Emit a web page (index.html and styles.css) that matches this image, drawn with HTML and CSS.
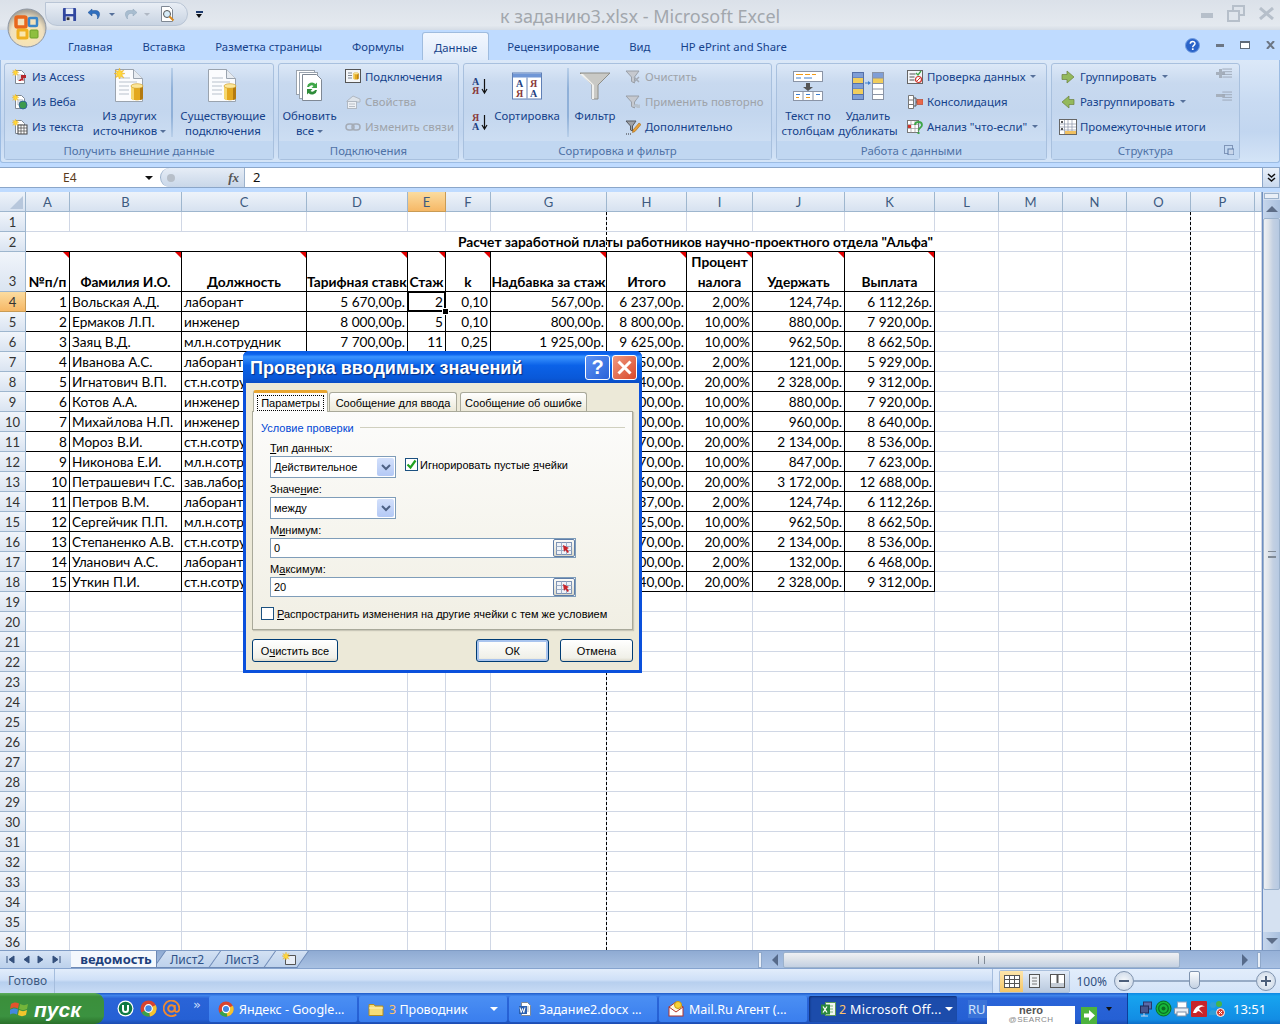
FILE: index.html
```html
<!DOCTYPE html>
<html lang="ru">
<head>
<meta charset="utf-8">
<title>к заданию3.xlsx - Microsoft Excel</title>
<link rel="stylesheet" href="styles.css">
</head>
<body>

<!-- shared icon parts -->
<svg class="defs" width="0" height="0">
  <symbol id="spark" viewBox="0 0 10 10"><path d="M5 0l1 3 3-1-2 2.500 3 .5-3 1 2 3-3-1.500-1 3-1-3-3 1.500 2-3-3-1 3-.5-2-2.500 3 1z" fill="#ffd83a" stroke="#e8a818" stroke-width=".4"/></symbol>
  <symbol id="page" viewBox="0 0 16 16"><path d="M3.500 1.500h6l3 3v10h-9z" fill="#fff" stroke="#7f8894"/><path d="M5 6h6M5 8h6M5 10h6" stroke="#a9b4c2"/></symbol>
  <symbol id="bigpage" viewBox="0 0 32 36"><path d="M1.500 1.500h18l9 9v23h-27z" fill="#fbfcfe" stroke="#9aa3ae"/><path d="M19.500 1.500v9h9" fill="#e6ebf1" stroke="#9aa3ae"/><path d="M5 10h11M5 14h18M5 18h10M5 22h10M5 26h10" stroke="#b8c1cc"/></symbol>
  <symbol id="cyl" viewBox="0 0 14 18"><path d="M1 3v12c0 3 12 3 12 0V3z" fill="#e3a81f"/><path d="M1 3v12c0 1.500 2 2 3 2.300V4z" fill="#f6d76e"/><path d="M10 4v13c1.500-.4 3-1 3-2V3z" fill="#b37a10"/><ellipse cx="7" cy="3" rx="6" ry="2.300" fill="#fbe69a" stroke="#c99416" stroke-width=".6"/></symbol>
  <symbol id="funnel" viewBox="0 0 32 28"><path d="M1 1h30L19 13v14h-6V13z" fill="#c9c9c5" stroke="#8e8e88"/><path d="M13 13v14h2V13L4 2H1z" fill="#f1f1ee"/></symbol>
  <symbol id="smallfunnel" viewBox="0 0 16 16"><path d="M1 2h13L9.500 8v6l-3-1.500V8z" fill="#c6c9cf" stroke="#9aa0a8"/></symbol>
  <symbol id="out" viewBox="0 0 18 14"><path d="M6 2h11M6 5h11M6 8h11M6 11h11" stroke="#9aa4b2"/></symbol>
</svg>

<div class="window">

  <header class="titlebar">
    <div class="qat">
      <svg class="qat-icon" width="15" height="15" viewBox="0 0 16 16"><rect x="1" y="1" width="14" height="14" rx="1" fill="#31479f"/><rect x="4" y="1.500" width="8" height="6" fill="#e8eef8"/><rect x="4" y="10" width="8" height="5" fill="#dfe3ea"/><rect x="5" y="11" width="3" height="3" fill="#333"/></svg>
      <svg class="qat-icon undo" width="16" height="16" viewBox="0 0 16 16"><path d="M5 3L1 6.500 5 10V7.500c4-.6 6 1 5.500 5.500 3-3.500 3-8-1.500-8.500-1.500-.2-3 0-4 .2z" fill="#2f6fc0" stroke="#1f4f90" stroke-width=".5"/></svg>
      <i class="dd qat-dd"></i>
      <svg class="qat-icon redo" width="16" height="16" viewBox="0 0 16 16"><path d="M11 3l4 3.500L11 10V7.500c-4-.6-6 1-5.500 5.500-3-3.500-3-8 1.500-8.500 1.500-.2 3 0 4 .2z" fill="#a8bdd0" stroke="#8ea4b8" stroke-width=".5"/></svg>
      <i class="dd qat-dd off"></i>
      <svg class="qat-icon preview" width="18" height="18" viewBox="0 0 18 18"><path d="M2.500 1.500h8l3 3v12h-11z" fill="#fff" stroke="#7f8894"/><circle cx="8" cy="9" r="3.500" fill="#d7ecf8" stroke="#555"/><path d="M10.500 11.500l4 4" stroke="#d98a20" stroke-width="2"/></svg>
    </div>
    <div class="qat-more"><i class="bar"></i><i class="dd dark"></i></div>
    <div class="doc-title">к заданию3.xlsx - Microsoft Excel</div>
    <div class="win-buttons">
      <svg width="13" height="8" viewBox="0 0 13 8"><rect y="3" width="12" height="5" fill="#b6bfca"/></svg>
      <svg width="18" height="17" viewBox="0 0 18 17"><rect x="6" y="1" width="11" height="9" fill="none" stroke="#b6bfca" stroke-width="2"/><rect x="1" y="6" width="11" height="10" fill="#dfe5ec" stroke="#b6bfca" stroke-width="2"/></svg>
      <svg width="17" height="13" viewBox="0 0 17 13"><path d="M2 1l13 11M15 1L2 12" stroke="#b6bfca" stroke-width="3"/></svg>
    </div>
  </header>

  <nav class="tabs">
    <span class="tab">Главная</span>
    <span class="tab">Вставка</span>
    <span class="tab">Разметка страницы</span>
    <span class="tab">Формулы</span>
    <span class="tab active">Данные</span>
    <span class="tab">Рецензирование</span>
    <span class="tab">Вид</span>
    <span class="tab">HP ePrint and Share</span>
    <div class="doc-buttons">
      <svg width="15" height="15" viewBox="0 0 15 15"><circle cx="7.500" cy="7.500" r="7" fill="#2a63c8" stroke="#6f9be0"/><path d="M5.300 5.800c0-3 4.700-3 4.700-.2 0 1.900-2.300 1.800-2.300 3.600" fill="none" stroke="#fff" stroke-width="1.500"/><rect x="6.900" y="10.300" width="1.700" height="1.700" fill="#fff"/></svg>
      <svg width="8" height="4" viewBox="0 0 8 4"><rect width="8" height="3" y="1" fill="#6c7684"/></svg>
      <svg width="10" height="8" viewBox="0 0 10 8"><rect x=".5" y=".5" width="9" height="7" fill="#fff" stroke="#5f6a78"/><rect width="10" height="2" fill="#5f6a78"/></svg>
      <svg width="9" height="8" viewBox="0 0 9 8"><path d="M1 0l7 8M8 0L1 8" stroke="#6c7684" stroke-width="2"/></svg>
    </div>
  </nav>

  <section class="ribbon">

    <div class="group g1">
      <div class="group-body">
        <div class="small-col">
          <div class="sbtn"><svg width="16" height="16" viewBox="0 0 16 16"><use href="#page"/><path d="M6 12l5-4 1 1-1 1 1 1-1 1-1-1-1 1z" fill="#b5262c"/><rect x="9" y="6" width="5" height="3" fill="#b5262c"/><use href="#spark" width="7" height="7"/></svg><span>Из Access</span></div>
          <div class="sbtn"><svg width="16" height="16" viewBox="0 0 16 16"><use href="#page"/><circle cx="11" cy="11" r="4" fill="#3d9a4c" stroke="#2a5aa0" stroke-width=".8"/><use href="#spark" width="7" height="7"/></svg><span>Из Веба</span></div>
          <div class="sbtn"><svg width="16" height="16" viewBox="0 0 16 16"><use href="#page"/><rect x="6" y="6" width="9" height="9" fill="#fff" stroke="#444"/><path d="M6 9h9M6 12h9M9 6v9M12 6v9" stroke="#444" stroke-width=".7"/><use href="#spark" width="7" height="7"/></svg><span>Из текста</span></div>
        </div>
        <div class="bbtn w-other">
          <svg class="big-icon" width="32" height="36" viewBox="0 0 32 36"><use href="#bigpage"/><use href="#cyl" x="16" y="15" width="14" height="18"/><use href="#spark" x="0" y="0" width="11" height="11"/></svg>
          <div class="bbtn-label">Из других<br>источников <i class="dd"></i></div>
        </div>
        <div class="vsep"></div>
        <div class="bbtn w-exist">
          <svg class="big-icon" width="32" height="36" viewBox="0 0 32 36"><use href="#bigpage"/><use href="#cyl" x="16" y="15" width="14" height="18"/></svg>
          <div class="bbtn-label">Существующие<br>подключения</div>
        </div>
      </div>
      <div class="group-label">Получить внешние данные</div>
    </div>

    <div class="group g2">
      <div class="group-body">
        <div class="bbtn w-refresh">
          <svg class="big-icon" width="30" height="36" viewBox="0 0 30 36"><rect x="1.500" y="2.500" width="18" height="24" fill="#fff" stroke="#9aa3ae"/><rect x="4.500" y="4.500" width="18" height="26" fill="#fff" stroke="#9aa3ae"/><path d="M7.500 6.500h14l5 5v21h-19z" fill="#fff" stroke="#7f8894"/><path d="M12 19a5 5 0 0 1 8.500-3l1.500-1.500V20h-5.500l2-2a3 3 0 0 0-4.500 1z" fill="#3fa648"/><path d="M22 22a5 5 0 0 1-8.500 3L12 26.500V21h5.500l-2 2a3 3 0 0 0 4.500-1z" fill="#2f8c39"/></svg>
          <div class="bbtn-label">Обновить<br>все <i class="dd"></i></div>
        </div>
        <div class="small-col">
          <div class="sbtn"><svg width="16" height="16" viewBox="0 0 16 16"><rect x=".5" y=".5" width="15" height="13" fill="#f4f6f9" stroke="#555"/><path d="M3 4h4M3 6.500h4M3 9h4" stroke="#7f8894"/><use href="#cyl" x="8" y="3" width="6" height="8"/></svg><span>Подключения</span></div>
          <div class="sbtn off"><svg width="16" height="16" viewBox="0 0 16 16"><path d="M2 7l6-5 7 3v3H2z" fill="#dde3ea" stroke="#b0b8c2"/><rect x="2.500" y="7.500" width="9" height="7" fill="#eef1f5" stroke="#b0b8c2"/><path d="M4 10h6M4 12.500h6" stroke="#b8bec6"/></svg><span>Свойства</span></div>
          <div class="sbtn off"><svg width="16" height="16" viewBox="0 0 16 16"><rect x="1" y="5" width="8" height="6" rx="3" fill="none" stroke="#a4abb5" stroke-width="1.500"/><rect x="7" y="5" width="8" height="6" rx="3" fill="none" stroke="#a4abb5" stroke-width="1.500"/></svg><span>Изменить связи</span></div>
        </div>
      </div>
      <div class="group-label">Подключения</div>
    </div>

    <div class="group g3">
      <div class="group-body">
        <div class="sort-col">
          <svg width="16" height="18" viewBox="0 0 16 18"><text x="0" y="8" class="sort-a">А</text><text x="0" y="17" class="sort-z">Я</text><path d="M12.500 2v13M10 12l2.500 4 2.500-4" fill="none" stroke="#111" stroke-width="1.200"/></svg>
          <svg width="16" height="18" viewBox="0 0 16 18"><text x="0" y="8" class="sort-z">Я</text><text x="0" y="17" class="sort-a">А</text><path d="M12.500 2v13M10 12l2.500 4 2.500-4" fill="none" stroke="#111" stroke-width="1.200"/></svg>
        </div>
        <div class="bbtn w-sort">
          <svg class="big-icon" width="30" height="27" viewBox="0 0 30 27"><rect x=".5" y=".5" width="29" height="26" fill="#fff" stroke="#5f7fb5"/><rect x="1" y="1" width="28" height="4" fill="#6f96d6"/><path d="M15 5v21" stroke="#5f7fb5"/><text x="4" y="14" class="sort-a big">А</text><text x="18" y="14" class="sort-z big">Я</text><text x="4" y="24" class="sort-z big">Я</text><text x="18" y="24" class="sort-a big">А</text></svg>
          <div class="bbtn-label">Сортировка</div>
        </div>
        <div class="vsep after-sort"></div>
        <div class="bbtn w-filter">
          <svg class="big-icon" width="32" height="28" viewBox="0 0 32 28"><use href="#funnel"/></svg>
          <div class="bbtn-label">Фильтр</div>
        </div>
        <div class="small-col">
          <div class="sbtn off"><svg width="16" height="16" viewBox="0 0 16 16"><use href="#smallfunnel"/><path d="M9 8l5 5M14 8l-5 5" stroke="#a4abb5" stroke-width="1.500"/></svg><span>Очистить</span></div>
          <div class="sbtn off"><svg width="16" height="16" viewBox="0 0 16 16"><use href="#smallfunnel"/><path d="M8 13a3.500 3.500 0 0 1 6-2l1-1v4h-4l1-1" fill="#b7c2ce"/></svg><span>Применить повторно</span></div>
          <div class="sbtn"><svg width="16" height="16" viewBox="0 0 16 16"><path d="M1 2h10L7.500 7v5l-2-1V7z" fill="#9ea2a8" stroke="#55585e"/><path d="M8 11l6-7 2 1.500-6 7-2.500 1z" fill="#e8a13a" stroke="#a66a12" stroke-width=".6"/><path d="M1 15h6" stroke="#333" stroke-dasharray="1 1"/></svg><span>Дополнительно</span></div>
        </div>
      </div>
      <div class="group-label">Сортировка и фильтр</div>
    </div>

    <div class="group g4">
      <div class="group-body">
        <div class="bbtn w-text">
          <svg class="big-icon" width="30" height="30" viewBox="0 0 30 30"><rect x=".5" y=".5" width="29" height="10" fill="#fff" stroke="#8a94a6"/><path d="M3 3.500h7M12 3.500h5M19 3.500h4" stroke="#f09a1a"/><path d="M3 7h5M11 7h8" stroke="#3f7fd0"/><path d="M13 12h4v4h3l-5 4-5-4h3z" fill="#555"/><rect x=".5" y="20.500" width="29" height="9" fill="#fff" stroke="#8a94a6"/><path d="M10 20v10M20 20v10" stroke="#8a94a6"/><path d="M3 23.500h4M13 23.500h4M23 23.500h4" stroke="#3f7fd0"/><path d="M3 26.500h3M13 26.500h4" stroke="#f09a1a"/></svg>
          <div class="bbtn-label">Текст по<br>столбцам</div>
        </div>
        <div class="bbtn w-dupes">
          <svg class="big-icon" width="32" height="28" viewBox="0 0 32 28"><rect x=".5" y=".5" width="11" height="27" fill="#7f9ed6" stroke="#5570a8"/><path d="M1 6h10M1 11.500h10M1 17h10M1 22.500h10" stroke="#5570a8"/><rect x="1" y="6" width="10" height="5" fill="#f1cd5c"/><rect x="1" y="17" width="10" height="5" fill="#f1cd5c"/><path d="M13 11h4" stroke="#3f7fd0"/><path d="M16 9l3 2-3 2z" fill="#3f7fd0"/><rect x="20.500" y=".5" width="11" height="27" fill="#fff" stroke="#8a94a6"/><rect x="21" y="1" width="10" height="5" fill="#7f9ed6"/><rect x="21" y="6" width="10" height="5" fill="#f1cd5c"/><path d="M21 6h10M21 11.500h10M21 17h10M21 22.500h10" stroke="#8a94a6"/></svg>
          <div class="bbtn-label">Удалить<br>дубликаты</div>
        </div>
        <div class="small-col">
          <div class="sbtn"><svg width="16" height="16" viewBox="0 0 16 16"><rect x=".5" y="1.500" width="15" height="13" fill="#f4f6f9" stroke="#666"/><path d="M2.500 5h6M2.500 8h5M2.500 11h5" stroke="#555"/><path d="M9 4l2 2 3-4" fill="none" stroke="#3fa648" stroke-width="1.300"/><circle cx="11.500" cy="10.500" r="3" fill="#fff" stroke="#d0342c" stroke-width="1.200"/><path d="M9.500 12.500l4-4" stroke="#d0342c"/></svg><span>Проверка данных</span><i class="dd after"></i></div>
          <div class="sbtn"><svg width="16" height="16" viewBox="0 0 16 16"><path d="M1.500 1.500h5v13h-5zM1.500 6h5M1.500 10.500h5" fill="#fff" stroke="#777"/><path d="M7 4h2v8H7M9 8h1" fill="none" stroke="#555"/><rect x="10" y="5.500" width="6" height="5" fill="#e8684a" stroke="#b23c22" stroke-width=".6"/></svg><span>Консолидация</span></div>
          <div class="sbtn"><svg width="16" height="16" viewBox="0 0 16 16"><rect x=".5" y="1.500" width="11" height="12" fill="#fff" stroke="#777"/><path d="M.5 5.500h11M.5 9.500h11M4 1.500v12M8 1.500v12" stroke="#999" stroke-width=".7"/><rect x="1" y="6" width="3" height="3" fill="#d0342c"/><path d="M8 6c0-4 7-4 7 0 0 3-3.500 2.500-3.500 5.500" fill="none" stroke="#3fa648" stroke-width="1.800"/><rect x="10.500" y="13" width="2" height="2" fill="#3fa648"/></svg><span>Анализ "что-если"</span><i class="dd after"></i></div>
        </div>
      </div>
      <div class="group-label">Работа с данными</div>
    </div>

    <div class="group g5">
      <div class="group-body">
        <div class="small-col outline-col">
          <div class="sbtn"><svg width="16" height="16" viewBox="0 0 16 16"><path d="M2 5.500h5V2l7 6-7 6v-3.500H2z" fill="#93b95c" stroke="#6c7f3d" stroke-width=".7"/></svg><span>Группировать</span><i class="dd after"></i></div>
          <div class="sbtn"><svg width="16" height="16" viewBox="0 0 16 16"><path d="M14 5.500H9V2L2 8l7 6v-3.500h5z" fill="#93b95c" stroke="#6c7f3d" stroke-width=".7"/></svg><span>Разгруппировать</span><i class="dd after"></i></div>
          <div class="sbtn"><svg class="wide-icon" width="18" height="16" viewBox="0 0 18 16"><rect x=".5" y=".5" width="17" height="15" fill="#fff" stroke="#666"/><path d="M5.500 1v14M9 1v14M13 1v14M1 5h16M1 8h16M1 11h16" stroke="#8a94a6" stroke-width=".7"/><path d="M2 3h2M3 2v2M2 10h2M3 9v2" stroke="#222"/><rect x="6" y="12" width="11" height="3" fill="#f0c060"/></svg><span>Промежуточные итоги</span></div>
        </div>
        <div class="outline-icons">
          <svg width="16" height="14" viewBox="0 0 16 14"><path d="M0 5h3V2h3v3h3v3H6v3H3V8H0z" fill="#a6b0bd"/><use href="#out" x="1" width="16" height="13"/></svg>
          <svg width="16" height="14" viewBox="0 0 16 14"><rect y="4" width="9" height="3" fill="#a6b0bd"/><use href="#out" x="1" width="16" height="13"/></svg>
        </div>
      </div>
      <div class="group-label">Структура<svg class="launcher" width="10" height="10" viewBox="0 0 10 10"><rect x=".5" y=".5" width="8" height="8" fill="none" stroke="#7f95b8"/><rect x="4" y="4" width="6" height="6" fill="#c8d6ea" stroke="#5f7da8"/></svg></div>
    </div>
  </section>

  <div class="formula-bar">
    <div class="name-box"><span>E4</span><i class="dd dark"></i></div>
    <div class="fx-pill"><i class="dot"></i><em>fx</em></div>
    <div class="formula-input">2</div>
    <div class="formula-more"><svg width="9" height="10" viewBox="0 0 9 10"><path d="M1 1l3.500 3L8 1M1 5l3.500 3L8 5" fill="none" stroke="#111" stroke-width="1.500"/></svg></div>
  </div>

  <div class="sheet-wrap">
    <div class="sheet">
      <table class="grid">
        <colgroup>
          <col class="c-rh"><col class="c-a"><col class="c-b"><col class="c-c"><col class="c-d"><col class="c-e"><col class="c-f"><col class="c-g"><col class="c-h"><col class="c-i"><col class="c-j"><col class="c-k"><col class="c-l"><col class="c-l"><col class="c-l"><col class="c-l"><col class="c-l"><col class="c-q">
        </colgroup>
        <tr class="col-heads">
          <th class="corner"><i></i></th><th>A</th><th>B</th><th>C</th><th>D</th><th class="on">E</th><th>F</th><th>G</th><th>H</th><th>I</th><th>J</th><th>K</th><th>L</th><th>M</th><th>N</th><th>O</th><th>P</th><th></th>
        </tr>
        <tr><th>1</th><td></td><td></td><td></td><td></td><td></td><td></td><td></td><td></td><td></td><td></td><td></td><td></td><td></td><td></td><td></td><td></td><td></td></tr>
        <tr class="caption-row"><th>2</th><td colspan="11" class="caption">Расчет заработной платы работников научно-проектного отдела "Альфа"</td><td></td><td></td><td></td><td></td><td></td><td></td></tr>
        <tr class="head-row"><th>3</th><td>№п/п</td><td>Фамилия И.О.</td><td>Должность</td><td>Тарифная ставка</td><td>Стаж</td><td>k</td><td>Надбавка за стаж</td><td>Итого</td><td>Процент<br>налога</td><td>Удержать</td><td>Выплата</td><td></td><td></td><td></td><td></td><td></td><td></td></tr>
        <tr class="data"><th class="on">4</th><td>1</td><td class="t">Вольская А.Д.</td><td class="t">лаборант</td><td>5 670,00р.</td><td class="sel">2</td><td>0,10</td><td>567,00р.</td><td>6 237,00р.</td><td>2,00%</td><td>124,74р.</td><td>6 112,26р.</td><td></td><td></td><td></td><td></td><td></td><td></td></tr>
        <tr class="data"><th>5</th><td>2</td><td class="t">Ермаков Л.П.</td><td class="t">инженер</td><td>8 000,00р.</td><td>5</td><td>0,10</td><td>800,00р.</td><td>8 800,00р.</td><td>10,00%</td><td>880,00р.</td><td>7 920,00р.</td><td></td><td></td><td></td><td></td><td></td><td></td></tr>
        <tr class="data"><th>6</th><td>3</td><td class="t">Заяц В.Д.</td><td class="t">мл.н.сотрудник</td><td>7 700,00р.</td><td>11</td><td>0,25</td><td>1 925,00р.</td><td>9 625,00р.</td><td>10,00%</td><td>962,50р.</td><td>8 662,50р.</td><td></td><td></td><td></td><td></td><td></td><td></td></tr>
        <tr class="data"><th>7</th><td>4</td><td class="t">Иванова А.С.</td><td class="t">лаборант</td><td></td><td></td><td></td><td></td><td>6 050,00р.</td><td>2,00%</td><td>121,00р.</td><td>5 929,00р.</td><td></td><td></td><td></td><td></td><td></td><td></td></tr>
        <tr class="data"><th>8</th><td>5</td><td class="t">Игнатович В.П.</td><td class="t">ст.н.сотрудник</td><td></td><td></td><td></td><td></td><td>11 640,00р.</td><td>20,00%</td><td>2 328,00р.</td><td>9 312,00р.</td><td></td><td></td><td></td><td></td><td></td><td></td></tr>
        <tr class="data"><th>9</th><td>6</td><td class="t">Котов А.А.</td><td class="t">инженер</td><td></td><td></td><td></td><td></td><td>8 800,00р.</td><td>10,00%</td><td>880,00р.</td><td>7 920,00р.</td><td></td><td></td><td></td><td></td><td></td><td></td></tr>
        <tr class="data"><th>10</th><td>7</td><td class="t">Михайлова Н.П.</td><td class="t">инженер</td><td></td><td></td><td></td><td></td><td>9 600,00р.</td><td>10,00%</td><td>960,00р.</td><td>8 640,00р.</td><td></td><td></td><td></td><td></td><td></td><td></td></tr>
        <tr class="data"><th>11</th><td>8</td><td class="t">Мороз В.И.</td><td class="t">ст.н.сотрудник</td><td></td><td></td><td></td><td></td><td>10 670,00р.</td><td>20,00%</td><td>2 134,00р.</td><td>8 536,00р.</td><td></td><td></td><td></td><td></td><td></td><td></td></tr>
        <tr class="data"><th>12</th><td>9</td><td class="t">Никонова Е.И.</td><td class="t">мл.н.сотрудник</td><td></td><td></td><td></td><td></td><td>8 470,00р.</td><td>10,00%</td><td>847,00р.</td><td>7 623,00р.</td><td></td><td></td><td></td><td></td><td></td><td></td></tr>
        <tr class="data"><th>13</th><td>10</td><td class="t">Петрашевич Г.С.</td><td class="t">зав.лабораторией</td><td></td><td></td><td></td><td></td><td>15 860,00р.</td><td>20,00%</td><td>3 172,00р.</td><td>12 688,00р.</td><td></td><td></td><td></td><td></td><td></td><td></td></tr>
        <tr class="data"><th>14</th><td>11</td><td class="t">Петров В.М.</td><td class="t">лаборант</td><td></td><td></td><td></td><td></td><td>6 237,00р.</td><td>2,00%</td><td>124,74р.</td><td>6 112,26р.</td><td></td><td></td><td></td><td></td><td></td><td></td></tr>
        <tr class="data"><th>15</th><td>12</td><td class="t">Сергейчик П.П.</td><td class="t">мл.н.сотрудник</td><td></td><td></td><td></td><td></td><td>9 625,00р.</td><td>10,00%</td><td>962,50р.</td><td>8 662,50р.</td><td></td><td></td><td></td><td></td><td></td><td></td></tr>
        <tr class="data"><th>16</th><td>13</td><td class="t">Степаненко А.В.</td><td class="t">ст.н.сотрудник</td><td></td><td></td><td></td><td></td><td>10 670,00р.</td><td>20,00%</td><td>2 134,00р.</td><td>8 536,00р.</td><td></td><td></td><td></td><td></td><td></td><td></td></tr>
        <tr class="data"><th>17</th><td>14</td><td class="t">Уланович А.С.</td><td class="t">лаборант</td><td></td><td></td><td></td><td></td><td>6 600,00р.</td><td>2,00%</td><td>132,00р.</td><td>6 468,00р.</td><td></td><td></td><td></td><td></td><td></td><td></td></tr>
        <tr class="data"><th>18</th><td>15</td><td class="t">Уткин П.И.</td><td class="t">ст.н.сотрудник</td><td></td><td></td><td></td><td></td><td>11 640,00р.</td><td>20,00%</td><td>2 328,00р.</td><td>9 312,00р.</td><td></td><td></td><td></td><td></td><td></td><td></td></tr>
        <tr><th>19</th><td></td><td></td><td></td><td></td><td></td><td></td><td></td><td></td><td></td><td></td><td></td><td></td><td></td><td></td><td></td><td></td><td></td></tr>
        <tr><th>20</th><td></td><td></td><td></td><td></td><td></td><td></td><td></td><td></td><td></td><td></td><td></td><td></td><td></td><td></td><td></td><td></td><td></td></tr>
        <tr><th>21</th><td></td><td></td><td></td><td></td><td></td><td></td><td></td><td></td><td></td><td></td><td></td><td></td><td></td><td></td><td></td><td></td><td></td></tr>
        <tr><th>22</th><td></td><td></td><td></td><td></td><td></td><td></td><td></td><td></td><td></td><td></td><td></td><td></td><td></td><td></td><td></td><td></td><td></td></tr>
        <tr><th>23</th><td></td><td></td><td></td><td></td><td></td><td></td><td></td><td></td><td></td><td></td><td></td><td></td><td></td><td></td><td></td><td></td><td></td></tr>
        <tr><th>24</th><td></td><td></td><td></td><td></td><td></td><td></td><td></td><td></td><td></td><td></td><td></td><td></td><td></td><td></td><td></td><td></td><td></td></tr>
        <tr><th>25</th><td></td><td></td><td></td><td></td><td></td><td></td><td></td><td></td><td></td><td></td><td></td><td></td><td></td><td></td><td></td><td></td><td></td></tr>
        <tr><th>26</th><td></td><td></td><td></td><td></td><td></td><td></td><td></td><td></td><td></td><td></td><td></td><td></td><td></td><td></td><td></td><td></td><td></td></tr>
        <tr><th>27</th><td></td><td></td><td></td><td></td><td></td><td></td><td></td><td></td><td></td><td></td><td></td><td></td><td></td><td></td><td></td><td></td><td></td></tr>
        <tr><th>28</th><td></td><td></td><td></td><td></td><td></td><td></td><td></td><td></td><td></td><td></td><td></td><td></td><td></td><td></td><td></td><td></td><td></td></tr>
        <tr><th>29</th><td></td><td></td><td></td><td></td><td></td><td></td><td></td><td></td><td></td><td></td><td></td><td></td><td></td><td></td><td></td><td></td><td></td></tr>
        <tr><th>30</th><td></td><td></td><td></td><td></td><td></td><td></td><td></td><td></td><td></td><td></td><td></td><td></td><td></td><td></td><td></td><td></td><td></td></tr>
        <tr><th>31</th><td></td><td></td><td></td><td></td><td></td><td></td><td></td><td></td><td></td><td></td><td></td><td></td><td></td><td></td><td></td><td></td><td></td></tr>
        <tr><th>32</th><td></td><td></td><td></td><td></td><td></td><td></td><td></td><td></td><td></td><td></td><td></td><td></td><td></td><td></td><td></td><td></td><td></td></tr>
        <tr><th>33</th><td></td><td></td><td></td><td></td><td></td><td></td><td></td><td></td><td></td><td></td><td></td><td></td><td></td><td></td><td></td><td></td><td></td></tr>
        <tr><th>34</th><td></td><td></td><td></td><td></td><td></td><td></td><td></td><td></td><td></td><td></td><td></td><td></td><td></td><td></td><td></td><td></td><td></td></tr>
        <tr><th>35</th><td></td><td></td><td></td><td></td><td></td><td></td><td></td><td></td><td></td><td></td><td></td><td></td><td></td><td></td><td></td><td></td><td></td></tr>
        <tr><th>36</th><td></td><td></td><td></td><td></td><td></td><td></td><td></td><td></td><td></td><td></td><td></td><td></td><td></td><td></td><td></td><td></td><td></td></tr>
      </table>
      <div class="page-break pb1"></div>
      <div class="page-break pb2"></div>
    </div>
    <div class="vscroll">
      <div class="split-h"></div>
      <div class="arrow-btn"><i class="tri-up"></i></div>
      <div class="vthumb"><i></i></div>
      <div class="vtrack"></div>
      <div class="arrow-btn"><i class="tri-down"></i></div>
    </div>
  </div>

  <div class="sheet-bar">
    <div class="tab-nav">
      <svg width="9" height="9" viewBox="0 0 9 9"><path d="M1 1v7M8 1L3 4.500 8 8z" stroke="#35507c" fill="#35507c"/></svg>
      <svg width="7" height="9" viewBox="0 0 7 9"><path d="M6 1L1 4.500 6 8z" stroke="#35507c" fill="#35507c"/></svg>
      <svg width="7" height="9" viewBox="0 0 7 9"><path d="M1 1l5 3.500L1 8z" stroke="#35507c" fill="#35507c"/></svg>
      <svg width="9" height="9" viewBox="0 0 9 9"><path d="M8 1v7M1 1l5 3.500L1 8z" stroke="#35507c" fill="#35507c"/></svg>
    </div>
    <div class="stab current">ведомость</div>
    <div class="stab">Лист2</div>
    <div class="stab">Лист3</div>
    <div class="stab newsheet"><svg width="15" height="14" viewBox="0 0 15 14"><path d="M3.500 3.500h10v9h-10z" fill="#e8eef7" stroke="#555"/><use href="#spark" width="8" height="8"/></svg></div>
    <div class="sheet-fill"></div>
    <div class="hscroll">
      <i class="split-v"></i>
      <i class="tri-left"></i>
      <div class="hthumb"><i></i></div>
      <i class="tri-right"></i>
      <i class="split-v"></i>
    </div>
  </div>

  <footer class="statusbar">
    <div class="status-text">Готово</div>
    <div class="status-fill"></div>
    <div class="status-right">
      <div class="views">
        <span class="view on"><svg width="16" height="13" viewBox="0 0 16 13"><rect x=".5" y=".5" width="15" height="12" fill="#fff" stroke="#555"/><path d="M.5 4.500h15M.5 8.500h15M5.500 .5v12M10.500 .5v12" stroke="#555"/></svg></span>
        <span class="view"><svg width="11" height="14" viewBox="0 0 11 14"><rect x=".5" y=".5" width="10" height="13" fill="#eef1f5" stroke="#555"/><path d="M3 4h5M3 7h5M3 10h5" stroke="#777"/></svg></span>
        <span class="view"><svg width="15" height="14" viewBox="0 0 15 14"><rect x=".5" y=".5" width="14" height="13" fill="#fff" stroke="#555"/><path d="M7.500 .5v9" stroke="#555" stroke-width="2"/><rect x="1" y="9" width="13" height="4" fill="#c6cdd6"/></svg></span>
      </div>
      <div class="zoom-pct">100%</div>
      <div class="zoom-btn"><b class="minus"></b></div>
      <div class="slider"><i class="slider-thumb"></i></div>
      <div class="zoom-btn"><b class="minus"></b><b class="plus"></b></div>
    </div>
  </footer>

  <div class="taskbar">
    <div class="start">
      <svg width="19" height="18" viewBox="0 0 19 18"><path d="M1 4c3-2 5-2 8-.5L8 8.500C5 7 3 7 0 9z" fill="#e5532d"/><path d="M10 4c3 1.500 5 1.500 8 0l-1 5c-3 1.500-5 1.500-8 0z" fill="#74b53a"/><path d="M0 10c3-2 5-2 8-.5L7 14.500c-3-1.500-5-1.500-8 .5z" fill="#4488e0"/><path d="M9 10c3 1.500 5 1.500 8 0l-1 5c-3 1.500-5 1.500-8 0z" fill="#f2c52c"/></svg>
      <span>пуск</span>
    </div>
    <div class="quick">
      <svg width="17" height="17" viewBox="0 0 17 17"><circle cx="8.500" cy="8.500" r="8" fill="#fff"/><circle cx="8.500" cy="8.500" r="6.800" fill="#0f7a43"/><path d="M5 5v4.500a3.500 3.500 0 0 0 7 0V5h-2v4.500a1.500 1.500 0 0 1-3 0V5z" fill="#fff"/></svg>
      <svg width="17" height="17" viewBox="0 0 17 17"><circle cx="8.500" cy="8.500" r="8" fill="#d8432f"/><path d="M8.500 8.500L1.500 12.500A8 8 0 0 0 10 16.400z" fill="#3aa14a"/><path d="M8.500 8.500L10 16.400A8 8 0 0 0 15.800 5z" fill="#f4c430"/><circle cx="8.500" cy="8.500" r="3.800" fill="#3f86e8" stroke="#fff" stroke-width="1.200"/></svg>
      <svg width="17" height="17" viewBox="0 0 17 17"><circle cx="8.500" cy="8.500" r="3.300" fill="none" stroke="#f08a30" stroke-width="2"/><path d="M11.800 5v5c0 3 4.500 2.500 4.500-1.500a7.800 7.800 0 1 0-3 6" fill="none" stroke="#f08a30" stroke-width="1.800"/></svg>
      <span class="more">»</span>
    </div>
    <div class="task w1"><svg width="16" height="16" viewBox="0 0 17 17"><circle cx="8.500" cy="8.500" r="8" fill="#d8432f"/><path d="M8.500 8.500L1.500 12.500A8 8 0 0 0 10 16.400z" fill="#3aa14a"/><path d="M8.500 8.500L10 16.400A8 8 0 0 0 15.800 5z" fill="#f4c430"/><circle cx="8.500" cy="8.500" r="3.800" fill="#3f86e8" stroke="#fff" stroke-width="1.200"/></svg><span>Яндекс - Google...</span></div>
    <div class="task w2"><svg width="16" height="14" viewBox="0 0 16 14"><path d="M1 2.500h5l1 1.500h8v9.500H1z" fill="#f6dd78" stroke="#b28c22"/><path d="M1 6h14" stroke="#fff3bd"/></svg><span><b class="count">3</b> Проводник</span><i class="dd white"></i></div>
    <div class="task w3"><svg width="16" height="16" viewBox="0 0 16 16"><use href="#page"/><rect x="1" y="5" width="8" height="8" fill="#2a5fb0"/><path d="M2 6.500l1.200 5 1.300-4 1.300 4 1.200-5" fill="none" stroke="#fff"/></svg><span>Задание2.docx ...</span></div>
    <div class="task w4"><svg width="16" height="16" viewBox="0 0 16 16"><rect x="1" y="6" width="14" height="9" fill="#fff" stroke="#b0342c"/><path d="M1 6l7 5 7-5-7-5z" fill="#fdf6dc" stroke="#b0342c"/><circle cx="10" cy="4" r="3.500" fill="#f7d13a" stroke="#c69a10"/></svg><span>Mail.Ru Агент (...</span></div>
    <div class="task w5 pressed"><svg width="16" height="16" viewBox="0 0 16 16"><rect x="5.500" y="1.500" width="10" height="13" fill="#f2f7f2" stroke="#5d9a5a"/><path d="M8 5h5M8 8h5M8 11h5" stroke="#7db87a"/><rect x="1" y="3.500" width="9" height="10" fill="#2b8a3c"/><path d="M3 5.500l4 6M7 5.500l-4 6" stroke="#fff" stroke-width="1.300"/></svg><span><b class="count">2</b> Microsoft Off...</span><i class="dd white"></i></div>
    <div class="lang">RU</div>
    <div class="nero"><b>nero</b><small>@SEARCH</small></div>
    <svg class="nero-go" width="16" height="17" viewBox="0 0 16 17"><rect width="16" height="17" fill="#4db33d"/><path d="M3 6.500h5V3l6 5.500L8 14v-3.500H3z" fill="#fff"/></svg>
    <i class="dd nero-dd"></i>
    <div class="tray">
      <svg width="16" height="16" viewBox="0 0 16 16"><rect x="5.500" y="1" width="8" height="7" fill="#5a6ba8" stroke="#2a3568"/><rect x="2.500" y="5" width="8" height="7" fill="#46568f" stroke="#1f2a58"/><path d="M6 12v3M3 15h7" stroke="#c7d2e8"/></svg>
      <svg width="17" height="17" viewBox="0 0 17 17"><circle cx="8.500" cy="8.500" r="7.500" fill="#17b63a" stroke="#0b6d22"/><circle cx="8.500" cy="8.500" r="4.800" fill="none" stroke="#0b6d22" stroke-width="1.300"/><circle cx="8.500" cy="8.500" r="2" fill="#0b6d22"/></svg>
      <svg width="17" height="16" viewBox="0 0 17 16"><rect x="4.500" y="1" width="9" height="6" fill="#fff" stroke="#8ea4c2"/><rect x="1.500" y="7" width="14" height="6" rx="1" fill="#e8edf4" stroke="#7d8fa8"/><rect x="4" y="11" width="9" height="4" fill="#fff" stroke="#7d8fa8"/></svg>
      <svg width="16" height="16" viewBox="0 0 16 16"><rect width="16" height="16" rx="1" fill="#c8242a"/><path d="M2 12c2-7 8-10 12-6-3-1-5 0-6 2 1 1 3 3 4 5-2-2-4-3-5-3l-2 2z" fill="#fff"/></svg>
      <svg width="17" height="17" viewBox="0 0 17 17"><circle cx="5" cy="5" r="3" fill="#2e9fd8"/><circle cx="11" cy="4" r="3" fill="#45b54a"/><path d="M1 14c0-5 7-5 8-1v2H1z" fill="#2e9fd8"/><circle cx="12.500" cy="12.500" r="4" fill="#d83a2e" stroke="#fff"/><path d="M10.800 10.800l3.400 3.400M14.200 10.800l-3.400 3.400" stroke="#fff"/></svg>
      <span class="clock">13:51</span>
    </div>
  </div>
</div>

<!-- validation dialog -->
<div class="dialog">
  <div class="dlg-title">
    <span>Проверка вводимых значений</span>
    <div class="dlg-help">?</div>
    <div class="dlg-close"><svg width="15" height="15" viewBox="0 0 15 15"><path d="M1.500 1.500l12 12M13.500 1.500l-12 12" stroke="#fff" stroke-width="3"/></svg></div>
  </div>
  <div class="dlg-body">
    <div class="dlg-tabs">
      <div class="dlg-tab active"><span>Параметры</span></div>
      <div class="dlg-tab t2">Сообщение для ввода</div>
      <div class="dlg-tab t3">Сообщение об ошибке</div>
    </div>
    <div class="dlg-panel">
      <div class="legend"><span>Условие проверки</span><i></i></div>
      <div class="fields">
        <label class="field-label"><u>Т</u>ип данных:</label>
        <div class="row-type">
          <div class="select"><span>Действительное</span><i class="sel-btn"><svg width="10" height="7" viewBox="0 0 10 7"><path d="M1 1l4 4 4-4" fill="none" stroke="#4d6185" stroke-width="2"/></svg></i></div>
          <div class="check-line"><i class="check on"><svg width="11" height="11" viewBox="0 0 11 11"><path d="M1.500 5.500l3 3 5-7" fill="none" stroke="#21a121" stroke-width="2.200"/></svg></i><span>Игнорировать пустые <u>я</u>чейки</span></div>
        </div>
        <label class="field-label"><span>Значе<u>н</u>ие:</span></label>
        <div class="select"><span>между</span><i class="sel-btn"><svg width="10" height="7" viewBox="0 0 10 7"><path d="M1 1l4 4 4-4" fill="none" stroke="#4d6185" stroke-width="2"/></svg></i></div>
        <label class="field-label">М<u>и</u>нимум:</label>
        <div class="ref-input"><span>0</span><i class="ref-btn"><svg width="16" height="13" viewBox="0 0 16 13"><rect x=".5" y=".5" width="15" height="12" fill="#eef2f8" stroke="#7f94b5"/><path d="M.5 4.500h15M.5 8.500h15M5.500 .5v12M10.500 .5v12" stroke="#9fb0c8"/><path d="M7 3l6 3-2 1 2 3-1.500 1-2-3-1.500 2z" fill="#c8242a"/></svg></i></div>
        <label class="field-label">М<u>а</u>ксимум:</label>
        <div class="ref-input"><span>20</span><i class="ref-btn"><svg width="16" height="13" viewBox="0 0 16 13"><rect x=".5" y=".5" width="15" height="12" fill="#eef2f8" stroke="#7f94b5"/><path d="M.5 4.500h15M.5 8.500h15M5.500 .5v12M10.500 .5v12" stroke="#9fb0c8"/><path d="M7 3l6 3-2 1 2 3-1.500 1-2-3-1.500 2z" fill="#c8242a"/></svg></i></div>
      </div>
      <div class="check-line spread"><i class="check"></i><span><u>Р</u>аспространить изменения на другие ячейки с тем же условием</span></div>
    </div>
    <div class="dlg-buttons">
      <button class="btn wide">О<u>ч</u>истить все</button>
      <span class="btn-gap"></span>
      <button class="btn default">ОК</button>
      <button class="btn">Отмена</button>
    </div>
  </div>
</div>

<!-- office orb, hangs over title bar and tabs -->
<svg class="orb" width="40" height="40" viewBox="0 0 40 40">
  <defs>
    <radialGradient id="orbFill" cx="50%" cy="65%" r="60%"><stop offset="0" stop-color="#ffe9a8"/><stop offset=".7" stop-color="#efe0c0"/><stop offset="1" stop-color="#a9a498"/></radialGradient>
  </defs>
  <circle cx="20" cy="20" r="19" fill="url(#orbFill)" stroke="#8d96a3"/>
  <rect x="9" y="9" width="10" height="10" rx="1.500" fill="none" stroke="#e8671c" stroke-width="3.500"/>
  <rect x="22" y="10" width="8" height="8" rx="1" fill="none" stroke="#3b86c8" stroke-width="2.500"/>
  <rect x="11" y="22" width="9" height="8" rx="1" fill="none" stroke="#f0b020" stroke-width="3"/>
  <rect x="23" y="22" width="8" height="8" rx="1" fill="#8fbf3f" stroke="#6ca02a"/>
</svg>

</body>
</html>
```

FILE: styles.css
```css
html {box-sizing: border-box;}
*, *:before, *:after {
    box-sizing: inherit;
}

body {
    margin: 0;
    width: 1280px;
    height: 1024px;
    overflow: hidden;
    position: relative;
    font-family: "Noto Sans", "Liberation Sans", sans-serif;
    font-size: 11.4px;
    color: #15428b;
}

.defs {
    position: absolute;
}

.window {
    display: flex;
    flex-direction: column;
    height: 1024px;
    background: #bfdbff;
}

/* small dropdown triangle used all over the ribbon */
.dd {
    display: inline-block;
    width: 0;
    height: 0;
    border-left: 3px solid transparent;
    border-right: 3px solid transparent;
    border-top: 3px solid #56709a;
    vertical-align: middle;
}

.dd.dark {
    border-top-color: #111;
    border-left-width: 4px;
    border-right-width: 4px;
    border-top-width: 4px;
}

.dd.white {
    border-top-color: #fff;
    border-left-width: 4px;
    border-right-width: 4px;
    border-top-width: 4px;
}

/* title bar */
.titlebar {
    height: 30px;
    display: flex;
    align-items: flex-start;
    background: linear-gradient(#dbe1e9, #e4e9ef 85%, #d5dce5);
    position: relative;
}

.qat {
    margin: 2px 0 0 45px;
    width: 143px;
    height: 24px;
    display: flex;
    align-items: center;
    padding-left: 16px;
    border-radius: 0 12px 12px 12px;
    background: linear-gradient(#e9eef5, #c8d3e2);
    border: 1px solid #b9c5d5;
}

.undo {
    margin-left: 10px;
}

.qat-dd {
    margin-left: 6px;
}

.qat-dd.off {
    border-top-color: #b0b8c4;
}

.redo {
    margin-left: 7px;
}

.preview {
    margin-left: 9px;
}

.qat-more {
    margin: 11px 0 0 8px;
    width: 7px;
    display: flex;
    flex-direction: column;
    gap: 1px;
}

.qat-more .bar {
    height: 2px;
    background: #1c3a6e;
}

.qat-more .dd.dark {
    border-left-width: 3px;
    border-right-width: 3px;
}

.doc-title {
    position: absolute;
    left: 500px;
    top: 3px;
    font-size: 18px;
    line-height: 26px;
    color: #a2a7ad;
    white-space: nowrap;
}

.win-buttons {
    margin-left: auto;
    padding: 5px 5px 0 0;
    display: flex;
    align-items: center;
    gap: 13px;
}

/* ribbon tabs */
.tabs {
    height: 30px;
    display: flex;
    align-items: flex-end;
    padding-left: 53px;
    background: #bfdbff;
    font-size: 11.3px;
}

.tab {
    height: 28px;
    line-height: 29px;
    padding: 0 15px;
    white-space: nowrap;
    color: #15428b;
}

.tab.active {
    padding: 0 11px;
    margin: 0 3px 0 3px;
    background: linear-gradient(#f2f7fe, #dfeafa);
    border: 1px solid #9fbcdf;
    border-bottom: 0;
    border-radius: 3px 3px 0 0;
}

.doc-buttons {
    margin-left: auto;
    height: 30px;
    display: flex;
    align-items: center;
    padding-right: 5px;
    gap: 16px;
}

/* ribbon body */
.ribbon {
    height: 103px;
    flex: none;
    display: flex;
    padding: 3px 2px 2px 3px;
    gap: 4px;
    border: 1px solid #9cbce3;
    border-top: 0;
    border-radius: 0 0 3px 3px;
    margin-bottom: 4px;
    background: linear-gradient(#dbe8f8, #c9dbf2 40%, #c2d6f0 70%, #d4e4f7);
}

.group {
    flex: none;
    display: flex;
    flex-direction: column;
    border: 1px solid #a8c0de;
    border-radius: 3px;
    background: linear-gradient(#dce8f7, #c8d9ef 20%, #c3d6ee 50%, #d2e2f5);
}

.g1 { width: 270px; }
.g2 { width: 181px; }
.g3 { width: 309px; }
.g4 { width: 271px; }
.g5 { width: 189px; }

.group-body {
    flex: 1;
    display: flex;
    min-height: 0;
}

.group-label {
    position: relative;
    height: 18px;
    line-height: 20px;
    text-align: center;
    color: #4f72a6;
    background: #c1d7f1;
}

.launcher {
    position: absolute;
    right: 5px;
    top: 4px;
}

.small-col {
    display: flex;
    flex-direction: column;
    flex: none;
}

.sbtn {
    height: 25px;
    display: flex;
    align-items: center;
    white-space: nowrap;
}

.sbtn > span {
    margin-top: -1px;
}

.sbtn > svg {
    flex: none;
    margin-right: 4px;
}

.sbtn > .wide-icon {
    margin: 0 3px 0 -1px;
}

.sbtn .after {
    margin-left: 5px;
}

.sbtn.off {
    color: #9ea3a9;
}

.g1 .small-col { padding-left: 7px; width: 83px; }
.g2 .small-col { padding-left: 5px; }
.g3 .small-col { padding-left: 4px; }
.g4 .small-col { padding-left: 8px; }
.outline-col { padding-left: 8px; width: 164px; }

.bbtn {
    flex: none;
    display: flex;
    flex-direction: column;
    align-items: center;
    text-align: center;
    white-space: nowrap;
}

.big-icon {
    margin-top: 4px;
    height: 36px;
}

.bbtn-label {
    line-height: 15px;
    margin-top: 4px;
}

.w-other { width: 83px; }
.w-exist { width: 100px; }
.w-refresh { width: 61px; }
.w-sort { width: 66px; }
.w-filter { width: 52px; }
.w-text { width: 58px; margin-left: 2px; }
.w-dupes { width: 62px; }

.vsep {
    flex: none;
    width: 2px;
    margin: 4px 0 4px 0;
    background: linear-gradient(#b9cfe9, #8fb0d8 30%, #8fb0d8 70%, #b9cfe9);
}

.vsep.after-sort {
    margin-left: 7px;
}

.sort-col {
    width: 30px;
    flex: none;
    display: flex;
    flex-direction: column;
    gap: 18px;
    padding: 13px 0 0 8px;
}

.sort-a, .sort-z {
    font-family: "Liberation Serif", serif;
    font-weight: bold;
    font-size: 10px;
}

.sort-a { fill: #1f3f80; }
.sort-z { fill: #8a3a3a; }
.big { font-size: 10px; }

.outline-icons {
    margin-left: auto;
    padding: 3px 7px 0 0;
    display: flex;
    flex-direction: column;
    gap: 9px;
}

/* formula bar */
.formula-bar {
    height: 21px;
    flex: none;
    display: flex;
    background: #fff;
    border-top: 1px solid #8ba6c9;
    border-bottom: 1px solid #8ba6c9;
    font-family: "Noto Sans", sans-serif;
    font-size: 12px;
    color: #111;
    margin-bottom: 4px;
}

.name-box {
    width: 160px;
    padding: 0 7px 0 63px;
    display: flex;
    align-items: center;
    justify-content: space-between;
    color: #5a3a1a;
}

.fx-pill {
    width: 85px;
    display: flex;
    align-items: center;
    justify-content: space-between;
    padding: 0 5px 0 6px;
    border-radius: 10px 0 0 10px;
    border-left: 1px solid #9cb2cc;
    border-right: 1px solid #9cb2cc;
    background: linear-gradient(#e6edf6, #c9d7e9);
}

.fx-pill .dot {
    width: 8px;
    height: 8px;
    border-radius: 50%;
    background: #b7bfc9;
}

.fx-pill em {
    font-family: "Liberation Serif", serif;
    font-weight: bold;
    font-size: 13px;
    color: #555;
}

.formula-input {
    flex: 1;
    padding-left: 8px;
    line-height: 19px;
    font-size: 13px;
}

.formula-more {
    width: 18px;
    display: flex;
    align-items: center;
    justify-content: center;
    background: linear-gradient(#e9f0f9, #c9d9ee);
    border-left: 1px solid #8ba6c9;
    border-right: 1px solid #8ba6c9;
}

/* worksheet */
.sheet-wrap {
    height: 758px;
    flex: none;
    display: flex;
    background: #fff;
    border-top: 0;
}

.sheet {
    position: relative;
    width: 1262px;
    overflow: hidden;
}

.grid {
    border-collapse: separate;
    border-spacing: 0;
    table-layout: fixed;
    width: 1262px;
    font-family: "Lato", "Noto Sans", sans-serif;
    font-size: 13.75px;
    color: #000;
}

.c-rh { width: 26px; }
.c-a { width: 44px; }
.c-b { width: 112px; }
.c-c { width: 125px; }
.c-d { width: 101px; }
.c-e { width: 38px; }
.c-f { width: 45px; }
.c-g { width: 116px; }
.c-h { width: 80px; }
.c-i { width: 66px; }
.c-j { width: 92px; }
.c-k { width: 90px; }
.c-l { width: 64px; }
.c-q { width: 7px; }

.grid tr {
    height: 20px;
}

.grid td {
    height: 20px;
    padding: 0 2px 0 2px;
    border-right: 1px solid #d0d7e5;
    border-bottom: 1px solid #d0d7e5;
    white-space: nowrap;
    overflow: hidden;
    line-height: 17px;
}

.grid th {
    padding: 0;
    font-weight: normal;
    font-size: 13px;
    text-align: center;
    color: #333;
    background: linear-gradient(#f1f5fb, #dae4f1);
    border-right: 1px solid #9eb6ce;
    border-bottom: 1px solid #9eb6ce;
}

.col-heads th {
    color: #3d5a80;
    background: linear-gradient(#eef3fa, #d7e2f0);
}

.corner {
    position: relative;
}

.corner i {
    position: absolute;
    right: 2px;
    bottom: 2px;
    border-left: 13px solid transparent;
    border-bottom: 13px solid #b7c7dc;
}

.grid th.on {
    background: linear-gradient(#fbdca0, #f6b866);
    border-color: #c99b54;
}

.caption {
    text-align: right;
    font-weight: bold;
}

.grid .caption {
    border-right: 0;
    border-bottom: 1px solid #000;
}

.head-row {
    font-weight: bold;
}

.grid .head-row {
    height: 40px;
}

.grid .head-row th {
    font-weight: normal;
    vertical-align: bottom;
    line-height: 19px;
}

.grid .head-row td {
    height: 40px;
    text-align: center;
    vertical-align: bottom;
    padding: 0;
    line-height: 19.5px;
}

.grid .head-row td:nth-child(-n+12) {
    border-right-color: #000;
    border-bottom-color: #000;
    position: relative;
}

.grid .head-row td:nth-child(-n+12):after {
    content: "";
    position: absolute;
    top: 0;
    right: 0;
    border-left: 6px solid transparent;
    border-top: 6px solid #e40000;
}

.grid .data td {
    text-align: right;
    font-size: 13.6px;
    padding-top: 2px;
}

.grid .data td:nth-child(-n+12) {
    border-right-color: #000;
    border-bottom-color: #000;
}

.grid .data .t {
    text-align: left;
}

.grid .data .sel {
    position: relative;
    overflow: visible;
}

.sel:after {
    content: "";
    position: absolute;
    top: -1px;
    left: -1px;
    right: -1px;
    bottom: -1px;
    border: 2px solid #000;
    box-shadow: inset 0 0 0 1px #fff;
}

.sel:before {
    content: "";
    position: absolute;
    right: -4px;
    bottom: -4px;
    width: 7px;
    height: 7px;
    background: #000;
    border: 1px solid #fff;
    z-index: 1;
}

.page-break {
    position: absolute;
    top: 20px;
    bottom: 0;
    border-left: 1px dashed #000;
}

.pb1 { left: 606px; }
.pb2 { left: 1190px; }

.vscroll {
    width: 18px;
    display: flex;
    flex-direction: column;
    border-left: 1px solid #6f8fc3;
    background: #d5e1f1;
}

.split-h {
    height: 6px;
    margin: 1px;
    background: #e9eff7;
    border: 1px solid #9cb2cc;
}

.arrow-btn {
    height: 18px;
    display: flex;
    align-items: center;
    justify-content: center;
    background: linear-gradient(90deg, #c6d6ec, #a9c0de);
}

.tri-up {
    border-left: 6px solid transparent;
    border-right: 6px solid transparent;
    border-bottom: 6px solid #5d6d87;
}

.tri-down {
    border-left: 6px solid transparent;
    border-right: 6px solid transparent;
    border-top: 6px solid #5d6d87;
}

.vthumb {
    height: 672px;
    display: flex;
    align-items: center;
    justify-content: center;
    background: linear-gradient(90deg, #eef0f4, #dfe4ea 30%, #c3d0e2 60%, #b6c9e2);
    border: 1px solid #9cb2cc;
    border-radius: 2px;
}

.vthumb i {
    width: 8px;
    height: 7px;
    border-top: 1px solid #808a96;
    border-bottom: 1px solid #808a96;
    box-shadow: inset 0 -3px 0 -2px #808a96;
}

.vtrack {
    flex: 1;
}

/* sheet tabs and horizontal scrollbar */
.sheet-bar {
    height: 18px;
    flex: none;
    display: flex;
    align-items: stretch;
    background: linear-gradient(#8fabd3, #a9c1e2);
    border-top: 1px solid #7f9bc4;
    font-family: "Noto Sans", sans-serif;
    font-size: 12px;
}

.tab-nav {
    width: 71px;
    display: flex;
    align-items: center;
    justify-content: space-between;
    padding: 0 10px 0 6px;
    background: linear-gradient(#d7e4f5, #bcd1ec);
}

.stab {
    position: relative;
    width: 55px;
    padding-left: 5px;
    text-align: center;
    line-height: 17px;
    color: #2f5288;
    z-index: 0;
}

.stab:before {
    content: "";
    position: absolute;
    z-index: -1;
    top: 0;
    bottom: 0;
    left: 2px;
    right: -4px;
    transform: skewX(-35deg);
    background: linear-gradient(#d3e1f3, #bed2ec);
    border-left: 1px solid #6d89b5;
    border-right: 1px solid #6d89b5;
    border-bottom: 1px solid #6d89b5;
}

.stab.current {
    width: 86px;
    padding-left: 4px;
    font-weight: bold;
    font-size: 13px;
    color: #1d3f7c;
    z-index: 1;
}

.stab.current:before {
    left: 0;
    right: 0;
    transform: none;
    background: #f4f8fd;
    border-left: 0;
    border-right: 1px solid #6d89b5;
    border-bottom: 1px solid #6d89b5;
}

.stab.newsheet {
    width: 44px;
    padding-left: 0;
    padding-top: 1px;
    line-height: 14px;
}

.stab.newsheet:before {
    right: 8px;
}

.sheet-fill {
    flex: 1;
}

.hscroll {
    width: 522px;
    display: flex;
    align-items: center;
    padding-right: 3px;
    background: linear-gradient(#96b1d8, #a8c0e2);
}

.split-v {
    width: 4px;
    height: 16px;
    background: #e9eff7;
    border: 1px solid #8fa8ca;
}

.tri-left {
    margin-left: 10px;
    border-top: 6px solid transparent;
    border-bottom: 6px solid transparent;
    border-right: 6px solid #566a8a;
}

.tri-right {
    margin: 0 9px 0 62px;
    border-top: 6px solid transparent;
    border-bottom: 6px solid transparent;
    border-left: 6px solid #566a8a;
}

.hthumb {
    width: 397px;
    height: 16px;
    margin-left: 5px;
    display: flex;
    align-items: center;
    justify-content: center;
    background: linear-gradient(#eef0f4, #dfe4ea 40%, #c3d0e2);
    border: 1px solid #9cb2cc;
    border-radius: 2px;
}

.hthumb i {
    width: 7px;
    height: 8px;
    border-left: 1px solid #808a96;
    border-right: 1px solid #808a96;
}

/* status bar */
.statusbar {
    height: 25px;
    flex: none;
    display: flex;
    background: linear-gradient(#e2edfb, #cfe0f7 45%, #b7cfee 55%, #c9dcf5);
    border-top: 1px solid #86a4cf;
    font-family: "Noto Sans", sans-serif;
    font-size: 12px;
}

.status-text {
    width: 55px;
    line-height: 24px;
    padding-left: 8px;
    color: #3f5a80;
    border-right: 1px solid #a5bddd;
}

.status-fill {
    flex: 1;
    border-right: 1px solid #a5bddd;
}

.status-right {
    width: 287px;
    display: flex;
    align-items: center;
    padding-left: 6px;
    background: linear-gradient(#e2edfb, #d3e3f8);
}

.views {
    display: flex;
    height: 23px;
    border: 1px solid #a9bfdc;
    border-radius: 2px;
}

.view {
    width: 23px;
    display: flex;
    align-items: center;
    justify-content: center;
    background: linear-gradient(#e3ecf8, #b9c9de);
}

.view.on {
    background: linear-gradient(#fde6ac, #f6c665);
}

.zoom-pct {
    width: 44px;
    text-align: right;
    padding-right: 7px;
    color: #2f4f80;
}

.zoom-btn {
    position: relative;
    flex: none;
    width: 20px;
    height: 20px;
    border-radius: 50%;
    border: 1px solid #7f93ae;
    background: radial-gradient(#f7fafd, #c5d2e3);
}

.minus {
    position: absolute;
    left: 4px;
    top: 8px;
    width: 10px;
    height: 2px;
    background: #4d5f7a;
}

.plus {
    position: absolute;
    left: 8px;
    top: 4px;
    width: 2px;
    height: 10px;
    background: #4d5f7a;
}

.slider {
    position: relative;
    flex: none;
    width: 122px;
    height: 2px;
    background: #97abc6;
}

.slider-thumb {
    position: absolute;
    left: 55px;
    top: -9px;
    width: 11px;
    height: 18px;
    background: linear-gradient(#fafcfe, #c4d1e2);
    border: 1px solid #7f93ae;
    border-radius: 2px 2px 5px 5px;
}

/* windows taskbar */
.taskbar {
    height: 31px;
    flex: none;
    display: flex;
    align-items: center;
    position: relative;
    font-family: "DejaVu Sans", sans-serif;
    font-size: 12px;
    color: #fff;
    background: linear-gradient(#1f5bc9, #3f83ea 8%, #2a64d8 18%, #2560d4 85%, #1c4cb0);
}

.start {
    width: 104px;
    height: 31px;
    flex: none;
    display: flex;
    align-items: center;
    padding-left: 10px;
    gap: 5px;
    border-radius: 0 9px 9px 0;
    background: linear-gradient(#5eae5e, #3b8f3b 12%, #3b9240 75%, #2a702a);
    font-family: "Liberation Sans", sans-serif;
    font-style: italic;
    font-weight: bold;
    font-size: 21px;
}

.start span {
    padding-top: 3px;
}

.quick {
    width: 105px;
    flex: none;
    display: flex;
    align-items: center;
    gap: 6px;
    padding-left: 13px;
}

.more {
    font-size: 13px;
    margin: -8px 0 0 7px;
    color: #c7dcf8;
}

.task {
    height: 26px;
    width: 148px;
    flex: none;
    margin-right: 2px;
    display: flex;
    align-items: center;
    gap: 5px;
    padding: 0 9px;
    white-space: nowrap;
    overflow: hidden;
    border-radius: 2px;
    background: linear-gradient(#4b8ff3, #3a7eee);
    font-family: "Noto Sans", sans-serif;
    font-size: 12.5px;
}

.task svg {
    flex: none;
}

.task span {
    padding-top: 2px;
}

.task .dd {
    margin-left: auto;
    flex: none;
}

.task.pressed {
    background: #1c4cab;
    box-shadow: inset 1px 1px 2px #0f2f78;
    padding: 0 4px 0 11px;
    gap: 3px;
    letter-spacing: .3px;
}

.count {
    font-weight: normal;
    color: #ffc36b;
}

.lang {
    margin-left: 9px;
    width: 19px;
    overflow: hidden;
    font-family: "Noto Sans", sans-serif;
    font-size: 13px;
    color: #cfe2fb;
    background: #3a73d8;
}

.nero {
    align-self: flex-end;
    flex: none;
    width: 88px;
    height: 18px;
    display: flex;
    flex-direction: column;
    align-items: center;
    overflow: hidden;
    background: #fff;
    line-height: 9px;
    font-family: "Liberation Sans", sans-serif;
    color: #555;
}

.nero b {
    font-size: 11px;
}

.nero small {
    font-size: 8px;
    color: #888;
    letter-spacing: .5px;
}

.nero-go {
    margin-left: 6px;
    align-self: flex-end;
}

.nero-dd {
    margin-left: 9px;
}

.nero-dd.dd {
    border-top: 4px solid #111;
}

.tray {
    margin-left: auto;
    width: 153px;
    height: 31px;
    flex: none;
    display: flex;
    align-items: center;
    gap: 1px;
    padding-left: 10px;
    background: linear-gradient(#0c87e4, #17a4ef 10%, #128de4 85%, #0d6ec8);
    border-left: 1px solid #0c3f9a;
}

.clock {
    margin-left: 7px;
    font-family: "Noto Sans", sans-serif;
    font-size: 13px;
}

/* dialog floats over the sheet */
.dialog {
    position: absolute;
    left: 243px;
    top: 351px;
    width: 399px;
    height: 322px;
    display: flex;
    flex-direction: column;
    border-radius: 6px 6px 0 0;
    background: #0a50dc;
    padding: 0 3px 3px 3px;
    font-family: "Liberation Sans", sans-serif;
    font-size: 11px;
    color: #000;
}

.dlg-title {
    height: 32px;
    margin: 0 -3px;
    padding: 0 5px 0 7px;
    display: flex;
    align-items: center;
    border-radius: 6px 6px 0 0;
    background: linear-gradient(#0a5be0, #0a63ee 10%, #3a94ff 18%, #0b62e8 45%, #0958d8 85%, #0a4cc4);
    color: #fff;
    font-weight: bold;
    font-size: 18px;
    text-shadow: 1px 1px 1px #0b2f80;
}

.dlg-title span {
    flex: 1;
    padding-top: 2px;
    white-space: nowrap;
}

.dlg-help, .dlg-close {
    width: 25px;
    height: 25px;
    margin-left: 2px;
    border: 1px solid #fff;
    border-radius: 3px;
    display: flex;
    align-items: center;
    justify-content: center;
}

.dlg-help {
    background: linear-gradient(135deg, #5c92f4, #2a62d8);
    font-size: 20px;
    text-shadow: none;
}

.dlg-close {
    background: linear-gradient(135deg, #f09a80, #d8482a);
}

.dlg-body {
    flex: 1;
    display: flex;
    flex-direction: column;
    padding: 7px 6px 7px 6px;
    background: #ece9d8;
}

.dlg-tabs {
    display: flex;
    height: 22px;
    padding-left: 1px;
    margin-bottom: -1px;
    position: relative;
    z-index: 1;
}

.dlg-tab {
    height: 19px;
    margin-top: 2px;
    text-align: center;
    line-height: 20px;
    border: 1px solid #a9a99a;
    border-bottom: 0;
    border-radius: 3px 3px 0 0;
    background: linear-gradient(#fff, #ece9d8);
    white-space: nowrap;
}

.dlg-tab.t2 {
    width: 128px;
    margin: 2px 3px 0 1px;
}

.dlg-tab.t3 {
    width: 127px;
}

.dlg-tab.active {
    width: 75px;
    height: 22px;
    margin-top: 0;
    padding: 0 3px;
    border-top: 3px solid #e8a530;
    border-color: #e8a530 #a9a99a #fcfcfb;
    background: #fcfcfb;
    line-height: 14px;
}

.dlg-tab.active span {
    display: block;
    margin-top: 2px;
    border: 1px dotted #000;
}

.dlg-panel {
    height: 219px;
    padding: 9px 7px 0 8px;
    border: 1px solid #a9a99a;
    background: linear-gradient(#fcfcfb, #f1efe4);
    box-shadow: 1px 1px 1px #c9c7b8;
}

.legend {
    display: flex;
    align-items: center;
    gap: 6px;
    height: 13px;
    color: #0046d5;
}

.legend i {
    flex: 1;
    height: 1px;
    background: #d0d0bf;
}

.fields {
    padding: 8px 0 0 9px;
    width: 315px;
}

.field-label {
    display: block;
    line-height: 13px;
    height: 14px;
}

.row-type {
    display: flex;
    align-items: flex-start;
    width: 340px;
}

.select {
    width: 126px;
    height: 22px;
    display: flex;
    align-items: center;
    justify-content: space-between;
    margin-bottom: 5px;
    padding: 1px 1px 1px 3px;
    border: 1px solid #7f9db9;
    background: #fff;
}

.sel-btn {
    width: 17px;
    height: 18px;
    display: flex;
    align-items: center;
    justify-content: center;
    border-radius: 2px;
    background: linear-gradient(#d3e0fb, #b4c9f5);
}

.check-line {
    display: flex;
    align-items: center;
    gap: 3px;
    white-space: nowrap;
}

.row-type .check-line {
    margin: 2px 0 0 9px;
    gap: 2px;
}

.check {
    width: 13px;
    height: 13px;
    flex: none;
    display: flex;
    align-items: center;
    justify-content: center;
    background: #fff;
    border: 1px solid #1c5180;
}

.ref-input {
    width: 306px;
    height: 20px;
    display: flex;
    align-items: center;
    justify-content: space-between;
    margin-bottom: 5px;
    padding-left: 3px;
    border: 1px solid #7f9db9;
    background: #fff;
}

.ref-btn {
    width: 22px;
    height: 18px;
    display: flex;
    align-items: center;
    justify-content: center;
    border: 1px solid #5f7da8;
    border-radius: 2px;
    background: linear-gradient(#fbfbf8, #dcd9c9);
}

.spread {
    margin-top: 10px;
}

.dlg-buttons {
    display: flex;
    margin-top: 9px;
    gap: 11px;
}

.btn {
    width: 73px;
    height: 23px;
    padding: 0;
    font: inherit;
    color: #000;
    border: 1px solid #003c74;
    border-radius: 3px;
    background: linear-gradient(#fff, #f0f0e8 85%, #dcd8c8);
}

.btn.wide {
    width: 86px;
}

.btn.default {
    box-shadow: inset 0 0 0 2px #a9c4ee;
}

.btn-gap {
    flex: 1;
}

.orb {
    position: absolute;
    left: 7px;
    top: 8px;
}
```
